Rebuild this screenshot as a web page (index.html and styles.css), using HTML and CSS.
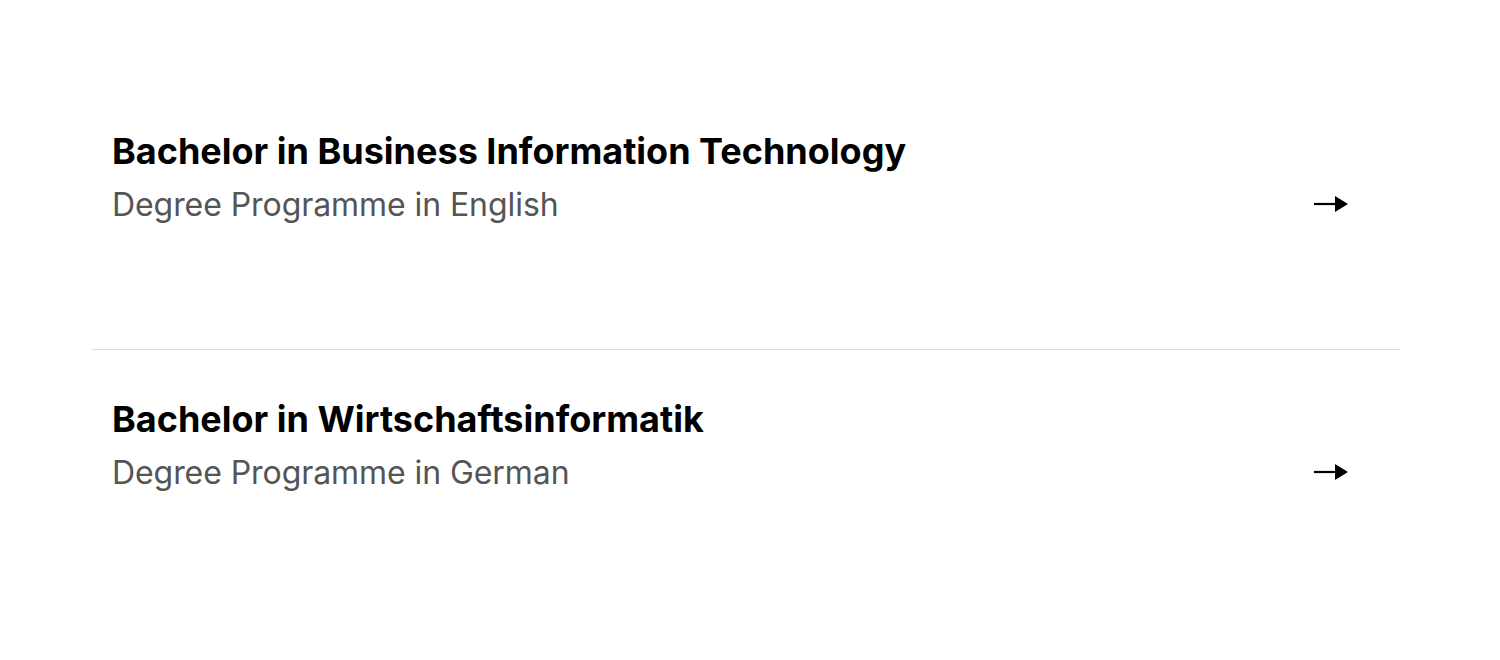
FILE: index.html
```html
<!DOCTYPE html>
<html lang="en">
<head>
<meta charset="utf-8">
<link rel="stylesheet" href="styles.css">
</head>
<body>
<main class="list">
  <a class="item" href="#">
    <div class="text">
      <h2 class="title">Bachelor in Business Information Technology</h2>
      <p class="sub">Degree Programme in English</p>
    </div>
    <svg class="arrow" width="34" height="18" viewBox="0 0 34 18"><line x1="0" y1="9" x2="23" y2="9" stroke="#000" stroke-width="2.2"/><polygon points="21,1 34,9 21,17" fill="#000"/></svg>
  </a>
  <a class="item" href="#">
    <div class="text">
      <h2 class="title">Bachelor in Wirtschaftsinformatik</h2>
      <p class="sub">Degree Programme in German</p>
    </div>
    <svg class="arrow" width="34" height="18" viewBox="0 0 34 18"><line x1="0" y1="9" x2="23" y2="9" stroke="#000" stroke-width="2.2"/><polygon points="21,1 34,9 21,17" fill="#000"/></svg>
  </a>
</main>
</body>
</html>
```
FILE: styles.css
```css
html, body {
  margin: 0;
  padding: 0;
  background: #fff;
}
body {
  font-family: Inter, "Noto Sans", sans-serif;
}
.list {
  margin: 82px 100px 0 92px;
  display: flex;
  flex-direction: column;
}
.item {
  display: flex;
  align-items: flex-end;
  justify-content: space-between;
  padding: 47px 52px 124px 20px;
  text-decoration: none;
  color: inherit;
}
.item + .item {
  border-top: 1px solid #dcdcd6;
}
.text {
  display: flex;
  flex-direction: column;
  gap: 12px;
}
.title {
  margin: 0;
  font-size: 36px;
  line-height: 44px;
  font-weight: 700;
  color: #000;
}
.sub {
  margin: 0;
  font-size: 32px;
  line-height: 40px;
  font-weight: 400;
  color: #555;
  letter-spacing: -0.07px;
}
.arrow {
  display: block;
  margin-bottom: 12px;
}
```
